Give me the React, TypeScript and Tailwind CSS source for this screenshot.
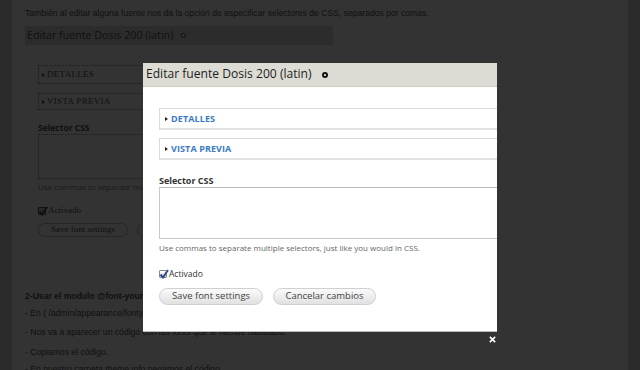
const sans = "font-['Liberation_Sans',Arial,sans-serif]";
const serif = "font-['Liberation_Serif','Times_New_Roman',serif]";
const lucida = "font-['Open_Sans','DejaVu_Sans',sans-serif]";
const ink = "text-[#101010]";

function Check({ dark }: { dark?: boolean }) {
  return (
    <span
      className={`relative inline-block h-[8px] w-[8px] shrink-0 rounded-[1px] border ${
        dark ? "border-[#111] bg-[#2a2a2a]" : "border-[#8a8a8a] bg-gradient-to-b from-white to-[#dcdcdc]"
      }`}
    >
      <svg viewBox="0 0 10 10" className="absolute -left-[1px] -top-[2px] h-[10px] w-[10px]">
        <path d="M1.5 5.5 L4 8.5 L9 1" fill="none" stroke={dark ? "#111" : "#2b4f8c"} strokeWidth="2" />
      </svg>
    </span>
  );
}

function Legend({ label }: { label: string }) {
  return (
    <div className="flex h-[22px] w-[420px] items-center gap-[3px] border border-[#dadada] border-b-2 border-b-[#e2e2e2] bg-white pl-[5px]">
      <span className="h-0 w-0 border-y-[2.5px] border-l-[3px] border-y-transparent border-l-[#222]" />
      <span className={`${lucida} text-[9px] font-bold tracking-[0.1px] text-[#3979c4]`}>{label}</span>
    </div>
  );
}

function DimLegend({ label, h, mt }: { label: string; h: string; mt: string }) {
  return (
    <div className={`${mt} flex ${h} w-[420px] items-center gap-[2px] border border-dotted border-[#1c1c1c] pl-[3px]`}>
      <span className="h-0 w-0 border-y-[2.5px] border-l-[3px] border-y-transparent border-l-[#101010]" />
      <span className={`${serif} ${ink} text-[9px] tracking-[0.3px]`}>{label}</span>
    </div>
  );
}

function PillButton({ label, width }: { label: string; width: string }) {
  return (
    <div
      className={`flex h-[17px] ${width} items-center justify-center rounded-full border border-[#cfcfcf] bg-gradient-to-b from-[#fbfbfb] to-[#e1e1e1] ${lucida} text-[9.5px] text-[#444]`}
    >
      {label}
    </div>
  );
}

export default function App() {
  return (
    <div className="relative flex h-[370px] w-[640px] overflow-hidden bg-[#2b2b2b]">
      {/* dimmed page behind the dialog */}
      <div className="ml-[12px] h-full w-[616px] bg-[#333] pl-[13px]">
        <p className={`${sans} ${ink} pt-[6px] text-[8.6px] leading-[14px]`}>
          También al editar alguna fuente nos da la opción de especificar selectores de CSS, separados por comas.
        </p>
        <div className="mt-[6px] flex h-[19px] w-[308px] items-center gap-[8px] bg-[#2c2c2c] pl-[2px]">
          <span className={`${lucida} ${ink} text-[10.7px]`}>Editar fuente Dosis 200 (latin)</span>
          <span className="inline-block h-[5px] w-[5px] rounded-full border-[1.5px] border-[#101010] bg-[#333]" />
        </div>

        <div className="pl-[13px]">
          <DimLegend label="DETALLES" h="h-[19px]" mt="mt-[20px]" />
          <DimLegend label="VISTA PREVIA" h="h-[17px]" mt="mt-[9px]" />
          <div className={`${lucida} ${ink} mt-[12px] h-[12px] text-[8.5px] font-bold leading-[12px]`}>Selector CSS</div>
          <div className="h-[45px] w-[420px] border border-dotted border-[#1c1c1c]" />
          <div className={`${lucida} mt-[3px] h-[10px] text-[8px] leading-[10px] text-[#1a1a1a]`}>
            Use commas to separate multiple selectors, just like you would in CSS.
          </div>
          <div className="mt-[13px] flex h-[12px] items-center gap-[2px]">
            <Check dark />
            <span className={`${serif} ${ink} text-[9px]`}>Activado</span>
          </div>
          <div className="mt-[6px] flex gap-[9px]">
            <div className={`flex h-[14px] w-[90px] items-center justify-center rounded-full border border-dotted border-[#1c1c1c] ${serif} ${ink} text-[9px]`}>
              Save font settings
            </div>
            <div className={`flex h-[14px] w-[90px] items-center justify-center rounded-full border border-dotted border-[#1c1c1c] ${serif} ${ink} text-[9px]`}>
              Cancelar cambios
            </div>
          </div>
        </div>

        <div className={`${sans} ${ink} text-[8.6px] leading-[12px]`}>
          <p className="mt-[53px] font-bold">2-Usar el modulo @font-your-face</p>
          <p className="mt-[5px]">- En ( /admin/appearance/fontyourface/ ) nos vamos a la pestaña exportar.</p>
          <p className="mt-[7px]">- Nos va a aparecer un código con las fonts que le hemos habilitado.</p>
          <p className="mt-[8px]">- Copiamos el código.</p>
          <p className="mt-[5px]">- En nuestro carpeta theme info pegamos el código.</p>
        </div>
      </div>

      {/* dialog */}
      <div className="absolute left-[143px] top-[63px] h-[269px] w-[354px] overflow-hidden border-b border-[#bdbdbd] bg-white">
        <div className="flex h-[24px] items-center gap-[10px] border-b border-dotted border-[#c4c4bc] bg-[#dcdcd4] pl-[3px]">
          <span className={`${lucida} text-[12.1px] text-[#1e1e1e]`}>Editar fuente Dosis 200 (latin)</span>
          <span className="inline-block h-[6px] w-[6px] rounded-full border-2 border-[#111] bg-white" />
        </div>
        <div className="pl-[16px] pt-[21px]">
          <Legend label="DETALLES" />
          <div className="mt-[8px]">
            <Legend label="VISTA PREVIA" />
          </div>
          <div className={`${lucida} mt-[15px] h-[12px] text-[9px] font-bold leading-[12px] text-[#333]`}>Selector CSS</div>
          <div className="h-[52px] w-[420px] border border-[#c9c9c9] border-t-[#b8b8b8]" />
          <div className={`${lucida} mt-[4px] h-[10px] text-[8px] leading-[10px] text-[#666]`}>
            Use commas to separate multiple selectors, just like you would in CSS.
          </div>
          <div className="mt-[15px] flex h-[12px] items-center gap-[2px]">
            <Check />
            <span className={`${lucida} text-[8.5px] text-[#333]`}>Activado</span>
          </div>
          <div className="mt-[8px] flex gap-[10px]">
            <PillButton label="Save font settings" width="w-[104px]" />
            <PillButton label="Cancelar cambios" width="w-[103px]" />
          </div>
        </div>
      </div>

      {/* close */}
      <svg viewBox="0 0 8 8" className="absolute left-[489px] top-[336px] h-[7px] w-[7px]">
        <path d="M1 1 L7 7 M7 1 L1 7" stroke="#fff" strokeWidth="1.8" />
      </svg>
    </div>
  );
}
